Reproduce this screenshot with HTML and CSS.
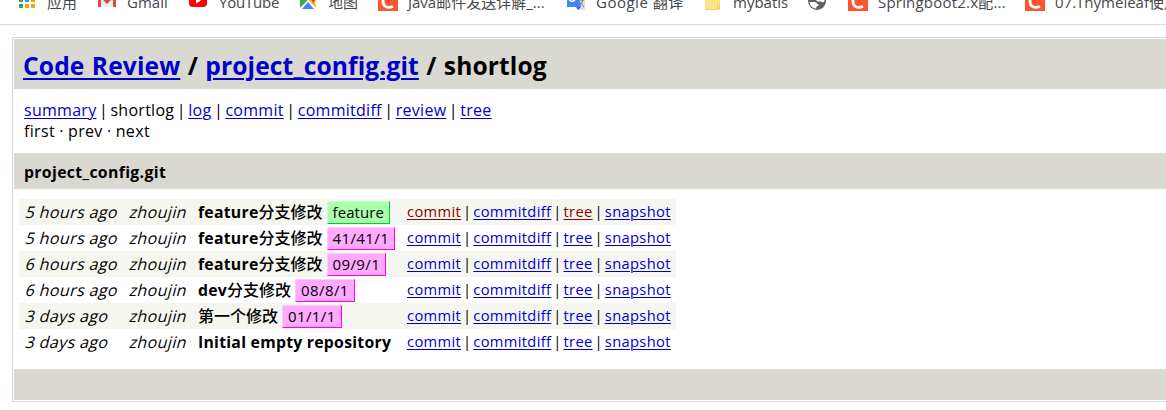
FILE: index.html
```html
<!DOCTYPE html>
<html lang="zh-CN">
<head>
<meta charset="utf-8">
<title>Code Review / project_config.git / shortlog</title>
<link rel="stylesheet" href="styles.css">
</head>
<body>
<nav class="bookmarks">
  <div class="bm bm-apps"><svg width="18" height="20" viewBox="0 0 18 20"><g><path fill="#34a853" d="M1 1h4v4H1zM1 7h4v4H1zM1 13h4v4H1z"/><path fill="#2196f3" d="M7 1h4v4H7zM7 7h4v4H7z"/><path fill="#ffa000" d="M13 1h4v4h-4zM13 7h4v4h-4zM7 13h4v4H7zM13 13h4v4h-4z"/></g></svg><span>应用</span></div>
  <div class="bm bm-gmail"><svg width="20" height="20" viewBox="0 0 20 20"><path fill="#eee" d="M1 2h18v14H1z"/><path fill="#e0483e" d="M1 2h2l7 7 7-7h2v14h-3V7l-6 6-6-6v9H1z"/></svg><span>Gmail</span></div>
  <div class="bm bm-youtube"><svg width="20" height="20" viewBox="0 0 20 20"><rect x="1" y="3" width="18" height="13" rx="4" fill="#f00"/><path fill="#fff" d="M8 6.500v6l5-3z"/></svg><span>YouTube</span></div>
  <div class="bm bm-maps"><svg width="18" height="20" viewBox="0 0 18 20"><path fill="#f1f1f1" d="M1 2h16v16H1z"/><path fill="#34a853" d="M1 2h9L8 10l-7 7z"/><path fill="#fbc02d" d="M9 10l4-4 4 8v4z"/><path fill="#fff" d="M1 17l8-8 8 8v1H1z"/><path fill="#4285f4" d="M3 18l6-7 6 7z"/><path fill="#ea4335" d="M11 3h6v5l-3 5c0-3-3-5-3-7z"/></svg><span>地图</span></div>
  <div class="bm bm-java"><svg width="20" height="20" viewBox="0 0 20 20"><path fill="#fc5531" d="M0 0h20v20H0z"/><path d="M15 5.500C8 2 5 6 5 10.500S9 18 15 15.500" fill="none" stroke="#fff" stroke-width="2.800"/></svg><span>Java邮件发送详解_...</span></div>
  <div class="bm bm-translate"><svg width="20" height="20" viewBox="0 0 20 20"><path fill="#e0e0e0" d="M7 5h12v14h-7z"/><path fill="#4285f4" d="M1 1h10l4 15H1z"/><path fill="#3367d6" d="M10 16h5l-3 3z"/><path d="M9 8H6M9 8a3 3 0 1 1-1-3" stroke="#fff" stroke-width="1.500" fill="none"/><path d="M12 9h6M15 7v2M17 9q-1 4-4 6M13 10l5 6" stroke="#607d8b" fill="none"/></svg><span>Google 翻译</span></div>
  <div class="bm bm-folder"><svg width="16" height="20" viewBox="0 0 16 20"><path fill="#ffe38b" d="M0 3h6l2 2h7v12q0 2-2 2H0z"/><path fill="#f6ce56" d="M12 13h3v5h-3zM0 18h13v1H0z"/><path fill="#ffe9a5" d="M13 13h1v4h-1z"/></svg><span>mybatis</span></div>
  <div class="bm bm-globe"><svg width="20" height="20" viewBox="0 0 20 20"><circle cx="10" cy="10" r="9" fill="#5f6368"/><path fill="#fff" d="M2.500 11H8q2 0 2 2h1.500v1.500Q9 15 9 17.500C5 17 3 14.500 2.500 11zM11 3h3c2 2 3.500 4 3.500 7-1 1.500-2.500 1.500-3.500.5H11Q9 10 9 8z"/></svg></div>
  <div class="bm bm-spring"><svg width="20" height="20" viewBox="0 0 20 20"><path fill="#fc5531" d="M0 0h20v20H0z"/><path d="M15 5.500C8 2 5 6 5 10.500S9 18 15 15.500" fill="none" stroke="#fff" stroke-width="2.800"/></svg><span>Springboot2.x配...</span></div>
  <div class="bm bm-thyme"><svg width="20" height="20" viewBox="0 0 20 20"><path fill="#fc5531" d="M0 0h20v20H0z"/><path d="M15 5.500C8 2 5 6 5 10.500S9 18 15 15.500" fill="none" stroke="#fff" stroke-width="2.800"/></svg><span>07.Thymeleaf使用</span></div>
</nav>
<main class="page">
  <h1 class="page-header"><a href="#">Code Review</a> / <a href="#">project_config.git</a> / shortlog</h1>
  <div class="page-nav"><div class="views"><a href="#">summary</a> | shortlog | <a href="#">log</a> | <a href="#">commit</a> | <a href="#">commitdiff</a> | <a href="#">review</a> | <a href="#">tree</a></div><div class="pager">first · prev · next</div></div>
  <h2 class="section-title">project_config.git</h2>
  <div class="log">
    <div class="row shaded"><span class="slanted">5 hours ago</span><span class="slanted">zhoujin</span><div class="subject"><b>feature<span class="cjk">分支修改</span></b><span class="ref head">feature</span></div><div class="links"><a class="visited" href="#">commit</a> | <a href="#">commitdiff</a> | <a class="visited" href="#">tree</a> | <a href="#">snapshot</a></div></div>
    <div class="row"><span class="slanted">5 hours ago</span><span class="slanted">zhoujin</span><div class="subject"><b>feature<span class="cjk">分支修改</span></b><span class="ref">41/41/1</span></div><div class="links"><a href="#">commit</a> | <a href="#">commitdiff</a> | <a href="#">tree</a> | <a href="#">snapshot</a></div></div>
    <div class="row shaded"><span class="slanted">6 hours ago</span><span class="slanted">zhoujin</span><div class="subject"><b>feature<span class="cjk">分支修改</span></b><span class="ref">09/9/1</span></div><div class="links"><a href="#">commit</a> | <a href="#">commitdiff</a> | <a href="#">tree</a> | <a href="#">snapshot</a></div></div>
    <div class="row"><span class="slanted">6 hours ago</span><span class="slanted">zhoujin</span><div class="subject"><b>dev<span class="cjk">分支修改</span></b><span class="ref">08/8/1</span></div><div class="links"><a href="#">commit</a> | <a href="#">commitdiff</a> | <a href="#">tree</a> | <a href="#">snapshot</a></div></div>
    <div class="row shaded"><span class="slanted">3 days ago</span><span class="slanted">zhoujin</span><div class="subject"><b><span class="cjk">第一个修改</span></b><span class="ref">01/1/1</span></div><div class="links"><a href="#">commit</a> | <a href="#">commitdiff</a> | <a href="#">tree</a> | <a href="#">snapshot</a></div></div>
    <div class="row"><span class="slanted">3 days ago</span><span class="slanted">zhoujin</span><div class="subject"><b>Initial empty repository</b></div><div class="links"><a href="#">commit</a> | <a href="#">commitdiff</a> | <a href="#">tree</a> | <a href="#">snapshot</a></div></div>
  </div>
  <footer class="page-footer"></footer>
</main>
</body>
</html>
```
FILE: styles.css
```css
* { box-sizing: border-box; }
body {
  margin: 0;
  height: 410px;
  overflow: hidden;
  background: #fff;
  color: #000;
  font-family: "Open Sans", "Noto Sans CJK SC", sans-serif;
  font-size: 15.8px;
}
a { color: #0000cc; text-decoration-thickness: 1px; text-underline-offset: 2px; }
a.visited { color: #880000; }

.bookmarks {
  display: flex;
  height: 25px;
  padding-left: 18px;
  border-bottom: 1px solid #dadada;
  overflow: hidden;
  color: #45494d;
  font-size: 15px;
  white-space: nowrap;
}
.bm { display: flex; flex: none; gap: 10px; height: 20px; margin-top: -9px; line-height: 22px; }
.bm svg { flex: none; }
.bm-apps { width: 79px; gap: 11px; }
.bm-gmail { width: 91px; }
.bm-youtube { width: 111px; gap: 11px; letter-spacing: -0.2px; }
.bm-maps { width: 79px; gap: 11px; }
.bm-java { width: 188px; }
.bm-translate { width: 139px; letter-spacing: 0.5px; }
.bm-folder { width: 103px; gap: 12px; }
.bm-globe { width: 40px; margin-left: -1px; margin-right: 1px; }
.bm-spring { width: 177px; letter-spacing: 0.2px; }

.page { margin: 12px 0 0 12px; padding: 1px 0 1px 1px; border: 1px solid #d9d8d1; border-right: 0; }
.page-header {
  height: 50px;
  margin: 0;
  padding-left: 9px;
  background: #d9d8d1;
  font-size: 24.600px;
  line-height: 54px;
  letter-spacing: 0.12px;
  word-spacing: 0.8px;
  white-space: nowrap;
}
.page-header a { text-decoration-thickness: 2px; text-underline-offset: 3px; }
.page-nav { height: 64px; padding: 11px 0 0 10px; font-size: 16px; line-height: 21px; letter-spacing: 0.35px; }
.views { letter-spacing: 0.28px; word-spacing: -2px; }
.pager { word-spacing: -0.3px; }
.section-title { height: 36px; margin: 0; padding-left: 10px; background: #d9d8d1; font-size: 15.800px; line-height: 38px; letter-spacing: 0.35px; }
.log { width: 662px; height: 180px; padding: 10px 0 0 5px; }
.row { display: grid; grid-template-columns: 104px 69px 209px 1fr; height: 26px; padding-left: 6px; line-height: 26px; white-space: nowrap; }
.slanted { justify-self: start; padding-left: 1px; transform: skewX(-15deg); font-size: 16px; letter-spacing: 0.4px; }
.shaded { background: #f6f6f0; }
.subject { display: flex; gap: 4px; }
.subject b { letter-spacing: 0.25px; }
.cjk { font-size: 16px; font-weight: 500; letter-spacing: 0; }
.ref {
  height: 23px;
  margin-top: 2px;
  padding: 0 5px;
  background: #ffaaff;
  border: 1px solid;
  border-color: #ffccff #ff00ee #ff00ee #ffccff;
  font-size: 15px;
  line-height: 20px;
  letter-spacing: 0.4px;
}
.head { background: #aaffaa; border-color: #ccffcc #00cc33 #00cc33 #ccffcc; letter-spacing: 0.1px; }
.links { font-size: 14.700px; line-height: 25px; letter-spacing: 0.35px; word-spacing: -2.3px; }
.page-footer { height: 31px; background: #d9d8d1; }
```
